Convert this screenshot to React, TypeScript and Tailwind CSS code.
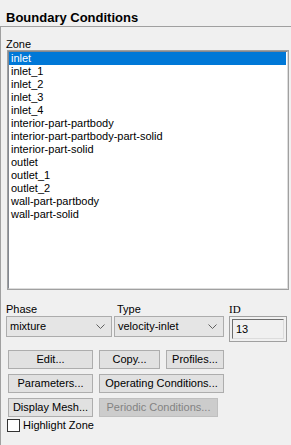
import React from 'react';

const zones = [
  'inlet',
  'inlet_1',
  'inlet_2',
  'inlet_3',
  'inlet_4',
  'interior-part-partbody',
  'interior-part-partbody-part-solid',
  'interior-part-solid',
  'outlet',
  'outlet_1',
  'outlet_2',
  'wall-part-partbody',
  'wall-part-solid',
];

function Chevron() {
  return (
    <svg width="9" height="6" viewBox="0 0 9 6" className="shrink-0">
      <path d="M0.5 0.5 L4.5 4.5 L8.5 0.5" fill="none" stroke="#606060" strokeWidth="1" />
    </svg>
  );
}

function Select({ value, width }: { value: string; width: string }) {
  return (
    <div
      className={`${width} h-[21px] flex items-center justify-between pl-[3px] pr-[6px] bg-[#e5e5e5] border border-[#acacac]`}
    >
      <span className="leading-[13px]">{value}</span>
      <Chevron />
    </div>
  );
}

function Btn({ label, width, disabled }: { label: string; width: string; disabled?: boolean }) {
  return (
    <div
      className={`${width} h-[19px] flex items-center justify-center leading-[13px] border ${
        disabled ? 'bg-[#cccccc] border-[#bfbfbf] text-[#838383]' : 'bg-[#e1e1e1] border-[#adadad] text-black'
      }`}
    >
      {label}
    </div>
  );
}

export default function App() {
  return (
    <div className="w-[291px] h-[445px] bg-[#f0f0f0] text-black text-[11px] font-['Liberation_Sans',Arial,sans-serif] flex flex-col overflow-hidden">
      {/* Title */}
      <div className="h-[27px] shrink-0 border-b border-[#a0a0a0] pl-[6px] pt-[10px] text-[13px] leading-[15px] font-bold">
        Boundary Conditions
      </div>

      {/* Panel */}
      <div className="flex-1 border-l border-[#a0a0a0] pl-[5px] flex flex-col">
        <div className="pt-[11px] h-[23px] leading-[12px]">Zone</div>

        {/* Zone list */}
        <div className="ml-[1px] w-[282px] h-[240px] border border-[#a0a0a0] bg-white">
          <div className="w-full h-full border border-[#828790] border-r-[#dcdcdc] border-b-[#dcdcdc] pr-[1px]">
            {zones.map((z, i) => (
              <div
                key={z}
                className={`h-[13px] leading-[13px] pl-[2px] whitespace-nowrap ${
                  i === 0 ? 'bg-[#0078d7] text-white' : ''
                }`}
              >
                {z}
              </div>
            ))}
          </div>
        </div>

        {/* Phase / Type / ID */}
        <div className="flex mt-[13px]">
          <div className="flex flex-col w-[108px]">
            <div className="h-[13px] leading-[13px]">Phase</div>
            <Select value="mixture" width="w-[106px]" />
          </div>
          <div className="flex flex-col w-[115px]">
            <div className="h-[13px] leading-[13px] pl-[3px]">Type</div>
            <Select value="velocity-inlet" width="w-[110px]" />
          </div>
          <div className="flex flex-col">
            <div className="h-[13px] leading-[13px] font-['Liberation_Serif',serif]">ID</div>
            <div className="w-[58px] h-[26px] border border-[#a0a0a0] p-[2px]">
              <div className="w-full h-full border border-[#6d6d6d] border-r-[#dcdcdc] border-b-[#dcdcdc] pl-[3px] pt-[3px] leading-[13px]">
                13
              </div>
            </div>
          </div>
        </div>

        {/* Buttons */}
        <div className="flex flex-col gap-[5px] mt-[8px] pl-[2px]">
          <div className="flex">
            <Btn label="Edit..." width="w-[85px]" />
            <div className="w-[6px]" />
            <Btn label="Copy..." width="w-[61px]" />
            <div className="w-[6px]" />
            <Btn label="Profiles..." width="w-[58px]" />
          </div>
          <div className="flex">
            <Btn label="Parameters..." width="w-[85px]" />
            <div className="w-[6px]" />
            <Btn label="Operating Conditions..." width="w-[125px]" />
          </div>
          <div className="flex">
            <Btn label="Display Mesh..." width="w-[85px]" />
            <div className="w-[6px]" />
            <Btn label="Periodic Conditions..." width="w-[119px]" disabled />
          </div>
        </div>

        {/* Checkbox */}
        <div className="flex items-center mt-[2px] pl-[1px]">
          <div className="w-[13px] h-[13px] border border-[#333333] bg-white" />
          <span className="ml-[3px] leading-[13px]">Highlight Zone</span>
        </div>
      </div>
    </div>
  );
}
